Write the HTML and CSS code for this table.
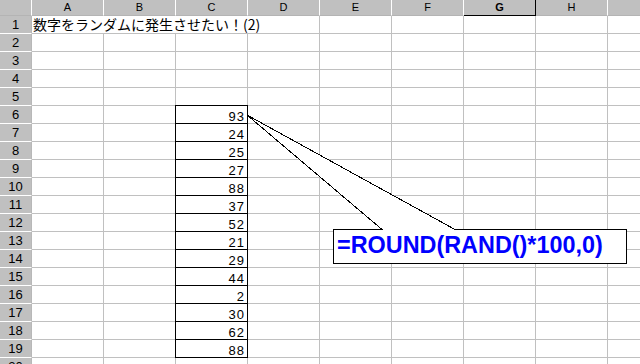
FILE: index.html
```html
<!DOCTYPE html>
<html lang="ja">
<head>
<meta charset="utf-8">
<title>数字をランダムに発生させたい！(2)</title>
<link rel="stylesheet" href="styles.css">
</head>
<body>
<div class="sheet">
  <div class="grid">
    <div class="ch"></div><div class="ch">A</div><div class="ch">B</div><div class="ch">C</div><div class="ch">D</div><div class="ch">E</div><div class="ch">F</div><div class="ch sel">G</div><div class="ch">H</div><div class="ch"></div>

    <div class="rh">1</div><div class="c title">数字をランダムに発生させたい！(2)</div><div class="c"></div><div class="c"></div><div class="c"></div><div class="c"></div><div class="c"></div>
    <div class="rh">2</div><div class="c"></div><div class="c"></div><div class="c"></div><div class="c"></div><div class="c"></div><div class="c"></div><div class="c"></div><div class="c"></div><div class="c"></div>
    <div class="rh">3</div><div class="c"></div><div class="c"></div><div class="c"></div><div class="c"></div><div class="c"></div><div class="c"></div><div class="c"></div><div class="c"></div><div class="c"></div>
    <div class="rh">4</div><div class="c"></div><div class="c"></div><div class="c"></div><div class="c"></div><div class="c"></div><div class="c"></div><div class="c"></div><div class="c"></div><div class="c"></div>
    <div class="rh">5</div><div class="c"></div><div class="c"></div><div class="c"></div><div class="c"></div><div class="c"></div><div class="c"></div><div class="c"></div><div class="c"></div><div class="c"></div>
    <div class="rh">6</div><div class="c"></div><div class="c"></div><div class="c num">93</div><div class="c"></div><div class="c"></div><div class="c"></div><div class="c"></div><div class="c"></div><div class="c"></div>
    <div class="rh">7</div><div class="c"></div><div class="c"></div><div class="c num">24</div><div class="c"></div><div class="c"></div><div class="c"></div><div class="c"></div><div class="c"></div><div class="c"></div>
    <div class="rh">8</div><div class="c"></div><div class="c"></div><div class="c num">25</div><div class="c"></div><div class="c"></div><div class="c"></div><div class="c"></div><div class="c"></div><div class="c"></div>
    <div class="rh">9</div><div class="c"></div><div class="c"></div><div class="c num">27</div><div class="c"></div><div class="c"></div><div class="c"></div><div class="c"></div><div class="c"></div><div class="c"></div>
    <div class="rh">10</div><div class="c"></div><div class="c"></div><div class="c num">88</div><div class="c"></div><div class="c"></div><div class="c"></div><div class="c"></div><div class="c"></div><div class="c"></div>
    <div class="rh">11</div><div class="c"></div><div class="c"></div><div class="c num">37</div><div class="c"></div><div class="c"></div><div class="c"></div><div class="c"></div><div class="c"></div><div class="c"></div>
    <div class="rh">12</div><div class="c"></div><div class="c"></div><div class="c num">52</div><div class="c"></div><div class="c"></div><div class="c"></div><div class="c"></div><div class="c"></div><div class="c"></div>
    <div class="rh">13</div><div class="c"></div><div class="c"></div><div class="c num">21</div><div class="c"></div><div class="c"></div><div class="c"></div><div class="c"></div><div class="c"></div><div class="c"></div>
    <div class="rh">14</div><div class="c"></div><div class="c"></div><div class="c num">29</div><div class="c"></div><div class="c"></div><div class="c"></div><div class="c"></div><div class="c"></div><div class="c"></div>
    <div class="rh">15</div><div class="c"></div><div class="c"></div><div class="c num">44</div><div class="c"></div><div class="c"></div><div class="c"></div><div class="c"></div><div class="c"></div><div class="c"></div>
    <div class="rh">16</div><div class="c"></div><div class="c"></div><div class="c num">2</div><div class="c"></div><div class="c"></div><div class="c"></div><div class="c"></div><div class="c"></div><div class="c"></div>
    <div class="rh">17</div><div class="c"></div><div class="c"></div><div class="c num">30</div><div class="c"></div><div class="c"></div><div class="c"></div><div class="c"></div><div class="c"></div><div class="c"></div>
    <div class="rh">18</div><div class="c"></div><div class="c"></div><div class="c num">62</div><div class="c"></div><div class="c"></div><div class="c"></div><div class="c"></div><div class="c"></div><div class="c"></div>
    <div class="rh">19</div><div class="c"></div><div class="c"></div><div class="c num">88</div><div class="c"></div><div class="c"></div><div class="c"></div><div class="c"></div><div class="c"></div><div class="c"></div>
    <div class="rh">20</div><div class="c"></div><div class="c"></div><div class="c"></div><div class="c"></div><div class="c"></div><div class="c"></div><div class="c"></div><div class="c"></div><div class="c"></div>
  </div>

  <svg class="callout-shape" width="640" height="364" viewBox="0 0 640 364" aria-hidden="true">
    <polygon points="333.5,229.5 382,229.5 247,115 455,229.5 626.5,229.5 626.5,263.5 333.5,263.5" fill="#fff" stroke="#000" stroke-width="1"/>
  </svg>
  <div class="callout-text">=ROUND(RAND()*100,0)</div>
</div>
</body>
</html>
```

FILE: styles.css
```css
html, body {
  margin: 0;
  padding: 0;
  background: #fff;
}

body {
  width: 640px;
  height: 364px;
  overflow: hidden;
  font-family: "Liberation Sans", Arial, sans-serif;
  color: #000;
}

.sheet {
  position: relative;
  width: 640px;
  height: 364px;
  overflow: hidden;
}

.grid {
  display: grid;
  grid-template-columns: 32px repeat(9, 72px);
  grid-template-rows: 16px repeat(20, 18px);
  width: 680px;
}

.grid > div {
  box-sizing: border-box;
  min-width: 0;
  border-right: 1px solid #c0c0c0;
  border-bottom: 1px solid #c0c0c0;
}

/* column headers */
.grid > .ch {
  background: #c0c0c0;
  border-right-color: #fff;
  border-bottom-color: #b4b4b4;
  display: flex;
  align-items: flex-end;
  justify-content: center;
  font-size: 11px;
  line-height: 13px;
  padding-bottom: 1px;
}

.grid > .ch.sel {
  font-weight: bold;
  border-right-color: #000;
  border-bottom-color: #000;
}

/* row headers */
.grid > .rh {
  background: #c0c0c0;
  border-bottom-color: #fff;
  border-right-color: #b8b8b8;
  display: flex;
  align-items: center;
  justify-content: center;
  font-size: 13px;
  line-height: 17px;
}

/* title text in A1 overflowing across to D1 */
.grid > .title {
  grid-column: span 4;
  display: flex;
  align-items: center;
  white-space: nowrap;
  padding-left: 1px;
  font-family: "Noto Sans CJK JP", "Noto Sans CJK SC", sans-serif;
  font-size: 14px;
  line-height: 17px;
}

/* bordered number cells C6:C19 */
.grid > .num {
  margin: -1px 0 0 -1px;
  border: 1px solid #000;
  display: flex;
  align-items: flex-end;
  justify-content: flex-end;
  padding-right: 2px;
  font-size: 13px;
  line-height: 13px;
  letter-spacing: 1px;
}

/* callout over the grid */
.callout-shape {
  position: absolute;
  left: 0;
  top: 0;
  shape-rendering: crispEdges;
  pointer-events: none;
}

.callout-text {
  position: absolute;
  left: 334px;
  top: 230px;
  width: 292px;
  height: 33px;
  box-sizing: border-box;
  padding-left: 3px;
  color: #0000ff;
  font-weight: bold;
  font-size: 23.4px;
  line-height: 30px;
  white-space: nowrap;
}
```
